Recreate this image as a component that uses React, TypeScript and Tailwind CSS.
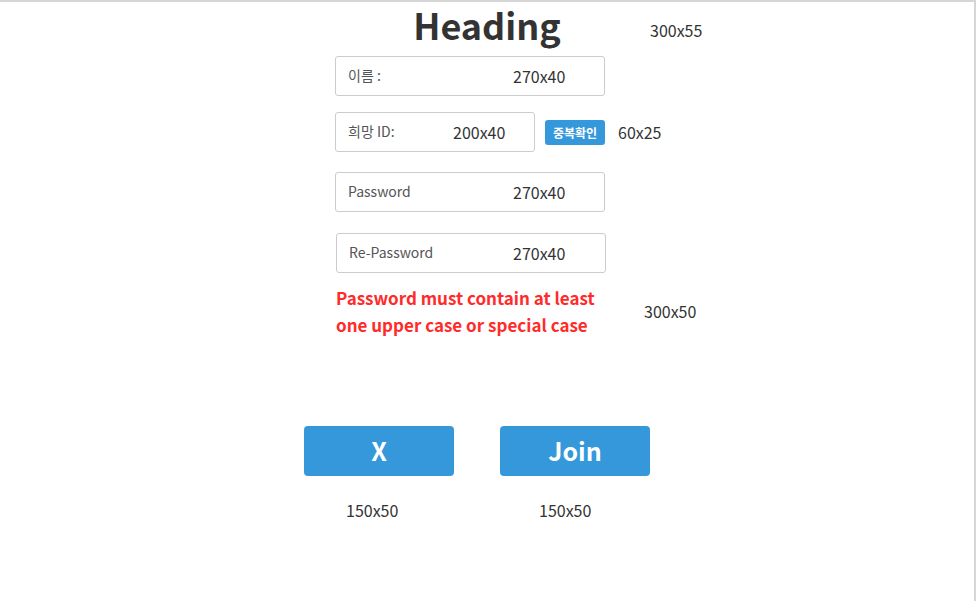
type FieldProps = {
  width: string;
  placeholder: string;
  size: string;
  labelWidth: string;
};

function Field({ width, placeholder, size, labelWidth }: FieldProps) {
  return (
    <div
      className={`${width} h-[40px] border border-[#cccccc] rounded-[3px] flex items-center pl-[12px] bg-white`}
    >
      <span className={`${labelWidth} mb-[2px] text-[14px] leading-[20px] text-[#555]`}>
        {placeholder}
      </span>
      <span className="text-[16px] leading-[20px] text-[#333]">{size}</span>
    </div>
  );
}

export default function App() {
  return (
    <div className="w-[976px] h-[601px] bg-white border-t-2 border-r-2 border-[#d6d6d6] font-['Noto_Sans_CJK_KR','Noto_Sans',sans-serif] text-[#333]">
      <div className="flex flex-col pl-[335px]">
        {/* 제목 */}
        <div className="flex h-[54px]">
          <h1 className="w-[300px] ml-[2px] text-center text-[36px] font-bold leading-[45px]">
            Heading
          </h1>
          <span className="ml-[13px] mt-[18px] text-[16px] leading-[20px] h-[20px]">
            300x55
          </span>
        </div>

        {/* 이름 */}
        <Field width="w-[270px]" placeholder="이름 :" size="270x40" labelWidth="w-[165px]" />

        {/* 아이디 + 중복확인 */}
        <div className="flex items-center mt-[16px]">
          <Field width="w-[200px]" placeholder="희망 ID:" size="200x40" labelWidth="w-[105px]" />
          <button className="ml-[10px] w-[60px] h-[25px] rounded-[3px] bg-[#3498db] text-white text-[12px] font-bold leading-[25px]">
            중복확인
          </button>
          <span className="ml-[13px] text-[16px] leading-[20px]">60x25</span>
        </div>

        {/* 비밀번호 */}
        <div className="mt-[20px]">
          <Field width="w-[270px]" placeholder="Password" size="270x40" labelWidth="w-[165px]" />
        </div>
        <div className="mt-[21px] ml-[1px]">
          <Field width="w-[270px]" placeholder="Re-Password" size="270x40" labelWidth="w-[164px]" />
        </div>

        {/* 에러 메시지 */}
        <div className="flex items-center mt-[11px]">
          <p className="w-[300px] ml-[1px] text-[17px] font-bold leading-[27px] text-[#ff2b2b]">
            Password must contain at least
            <br />
            one upper case or special case
          </p>
          <span className="ml-[8px] text-[16px] leading-[20px]">300x50</span>
        </div>

        {/* 버튼 */}
        <div className="flex gap-[46px] -ml-[31px] mt-[88px]">
          <div className="flex flex-col">
            <button className="w-[150px] h-[50px] pb-[3px] rounded-[4px] bg-[#3498db] text-white text-[25px] font-bold leading-[36px]">
              X
            </button>
            <span className="ml-[42px] mt-[24px] text-[16px] leading-[20px]">150x50</span>
          </div>
          <div className="flex flex-col">
            <button className="w-[150px] h-[50px] pb-[3px] rounded-[4px] bg-[#3498db] text-white text-[25px] font-bold leading-[36px]">
              Join
            </button>
            <span className="ml-[39px] mt-[24px] text-[16px] leading-[20px]">150x50</span>
          </div>
        </div>
      </div>
    </div>
  );
}
